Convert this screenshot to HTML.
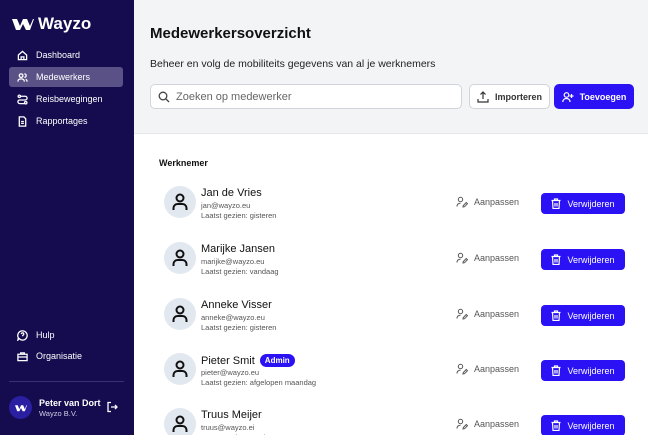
<!DOCTYPE html>
<html><head><meta charset="utf-8"><style>
*{box-sizing:border-box;margin:0;padding:0}
html,body{width:648px;height:435px;overflow:hidden}
body{font-family:"Liberation Sans",sans-serif;position:relative;background:#fff}
.sb{position:absolute;left:0;top:0;width:134px;height:435px;background:#150c4f;color:#fff}
.logo{position:absolute;left:12px;top:14px;font-size:17px;font-weight:bold;display:flex;align-items:center;gap:4px}
.nav{position:absolute;left:9px;width:114px;height:20px;border-radius:3px;font-size:9px;display:flex;align-items:center;padding-left:8px;gap:8px}
.nav svg{width:11px;height:11px;fill:none;stroke:#fff;stroke-width:1.4}
.act{background:#5a5287}
.sep{position:absolute;left:9px;right:10px;top:381px;height:1px;background:#3a3270}
.av{position:absolute;left:9px;top:396px;width:23px;height:23px;border-radius:50%;background:#2a1fa0;display:flex;align-items:center;justify-content:center;font-size:9px;font-weight:bold}
.hd{position:absolute;left:134px;top:0;right:0;height:134px;background:#f3f4f6;border-bottom:1px solid #e5e7eb}
h1{position:absolute;left:150px;top:25px;font-size:15px;font-weight:bold;color:#111}
.sub{position:absolute;left:150px;top:58px;font-size:10.5px;color:#222}
.search{position:absolute;left:150px;top:84px;width:312px;height:25px;border:1px solid #d1d5db;border-radius:5px;background:#fff;font-size:11px;color:#666;display:flex;align-items:center;padding-left:7px;gap:6px}
.btn{position:absolute;top:84px;height:25px;border-radius:5px;font-size:9px;font-weight:bold;display:flex;align-items:center;justify-content:center;gap:6px}
.imp{left:469px;width:81px;background:#fff;border:1px solid #d1d5db;color:#333}
.toe{left:554px;width:80px;background:#2a12f5;color:#fff}
.th{position:absolute;left:159px;top:158px;font-size:9px;font-weight:bold;color:#111}
.row{position:absolute;left:164px;width:470px;height:32px}
.ava{position:absolute;left:0;top:0;width:32px;height:32px;border-radius:50%;background:#e2e8f0;display:flex;align-items:center;justify-content:center}
.nm{position:absolute;left:37px;top:1px;font-size:11px;color:#111;display:flex;align-items:center;gap:5px}
.badge{background:#2a12f5;color:#fff;font-size:8px;font-weight:bold;border-radius:8px;padding:2px 5px}
.em{position:absolute;left:37px;top:15px;font-size:7.5px;color:#555}
.ls{position:absolute;left:37px;top:25px;font-size:7.5px;color:#555}
.aan{position:absolute;left:292px;top:10px;font-size:9px;color:#555;display:flex;align-items:center;gap:6px}
.ver{position:absolute;left:377px;top:7px;width:84px;height:21px;background:#2a12f5;border-radius:4px;color:#fff;font-size:9px;display:flex;align-items:center;justify-content:center;gap:6px}
</style></head><body>
<div class="sb">
 <div class="logo"><svg width="22" height="14" viewBox="0 0 22 14"><path d="M0 2h5l3 7 3-7h4l3 7 3-7h1l-4 11h-4l-3-6-3 6H4z" fill="#fff"/></svg>Wayzo</div>
 <div class="nav" style="top:45px"><svg viewBox="0 0 12 12"><path d="M1.5 5.5L6 1.5l4.5 4v5h-9z M4.5 10.5v-3h3v3"/></svg>Dashboard</div>
 <div class="nav act" style="top:67px"><svg viewBox="0 0 12 12"><circle cx="4.5" cy="4" r="2"/><path d="M1 10.5c0-2 1.5-3 3.5-3s3.5 1 3.5 3"/><path d="M8 2a2 2 0 010 4M9.5 8c1 .5 1.5 1.3 1.5 2.5"/></svg>Medewerkers</div>
 <div class="nav" style="top:89px"><svg viewBox="0 0 12 12"><circle cx="2.5" cy="2.5" r="1.3"/><circle cx="9.5" cy="9.5" r="1.3"/><path d="M4 2.5h5a2 2 0 010 4H3a2 2 0 000 4h5"/></svg>Reisbewegingen</div>
 <div class="nav" style="top:111px"><svg viewBox="0 0 12 12"><path d="M2.5 1h5l2 2v8h-7z M4.5 6h3M4.5 8h3"/></svg>Rapportages</div>
 <div class="nav" style="top:325px"><svg viewBox="0 0 12 12"><path d="M6 1a5 5 0 11-3.5 8.5L1 11l.5-2.5A5 5 0 016 1z M4.8 4.5a1.3 1.3 0 112 1c-.6.4-.8.7-.8 1.3"/></svg>Hulp</div>
 <div class="nav" style="top:346px"><svg viewBox="0 0 12 12"><path d="M1 3.5h10v7H1z M4 3.5V2h4v1.5 M1 6.5h10"/></svg>Organisatie</div>
 <div class="sep"></div>
 <div class="av"><svg width="12" height="8" viewBox="0 0 22 14"><path d="M0 2h5l3 7 3-7h4l3 7 3-7h1l-4 11h-4l-3-6-3 6H4z" fill="#fff"/></svg></div>
 <div style="position:absolute;left:39px;top:398px;font-size:9px;font-weight:bold">Peter van Dort</div>
 <div style="position:absolute;left:39px;top:409px;font-size:7.5px;color:#d0cde6">Wayzo B.V.</div>
 <svg style="position:absolute;left:106px;top:401px" width="12" height="12" viewBox="0 0 12 12" fill="none" stroke="#fff" stroke-width="1.3"><path d="M5 1.5H2v9h3 M5 6h6 M9 4l2 2-2 2"/></svg>
</div>
<div class="hd"></div>
<h1>Medewerkersoverzicht</h1>
<div class="sub">Beheer en volg de mobiliteits gegevens van al je werknemers</div>
<div class="search"><svg width="12" height="12" viewBox="0 0 12 12" fill="none" stroke="#444" stroke-width="1.3"><circle cx="5" cy="5" r="3.8"/><path d="M8 8l3 3"/></svg>Zoeken op medewerker</div>
<div class="btn imp"><svg width="12" height="12" viewBox="0 0 12 12" fill="none" stroke="#333" stroke-width="1.2"><path d="M1 8v3h10V8 M6 8V1 M3.5 3.5L6 1l2.5 2.5"/></svg>Importeren</div>
<div class="btn toe"><svg width="12" height="12" viewBox="0 0 12 12" fill="none" stroke="#fff" stroke-width="1.2"><circle cx="4.5" cy="4" r="2.3"/><path d="M.8 11c0-2.2 1.6-3.5 3.7-3.5S8 8.8 8 11 M9.5 3v4M7.5 5h4"/></svg>Toevoegen</div>
<div class="th">Werknemer</div>

<div class="row" style="top:186px"><div class="ava"><svg width="16" height="18" viewBox="0 0 16 18" fill="none" stroke="#111" stroke-width="2"><circle cx="8" cy="5" r="3.5"/><path d="M1.5 17v-2a4 4 0 014-4h5a4 4 0 014 4v2"/></svg></div><div class="nm">Jan de Vries</div><div class="em">jan@wayzo.eu</div><div class="ls">Laatst gezien: gisteren</div><div class="aan"><svg width="12" height="12" viewBox="0 0 12 12" fill="none" stroke="#555" stroke-width="1"><circle cx="4.5" cy="3.5" r="2.2"/><path d="M1 10.5c0-2 1.3-3.3 3.5-3.3 M7 11l.3-1.5 3-3 1.2 1.2-3 3z"/></svg>Aanpassen</div><div class="ver"><svg width="10" height="11" viewBox="0 0 10 11" fill="none" stroke="#fff" stroke-width="1.2"><path d="M.5 2.5h9 M3.5 2.5V1h3v1.5 M1.5 2.5l.5 8h6l.5-8 M4 5v3.5M6 5v3.5"/></svg>Verwijderen</div></div>

<div class="row" style="top:242px"><div class="ava"><svg width="16" height="18" viewBox="0 0 16 18" fill="none" stroke="#111" stroke-width="2"><circle cx="8" cy="5" r="3.5"/><path d="M1.5 17v-2a4 4 0 014-4h5a4 4 0 014 4v2"/></svg></div><div class="nm">Marijke Jansen</div><div class="em">marijke@wayzo.eu</div><div class="ls">Laatst gezien: vandaag</div><div class="aan"><svg width="12" height="12" viewBox="0 0 12 12" fill="none" stroke="#555" stroke-width="1"><circle cx="4.5" cy="3.5" r="2.2"/><path d="M1 10.5c0-2 1.3-3.3 3.5-3.3 M7 11l.3-1.5 3-3 1.2 1.2-3 3z"/></svg>Aanpassen</div><div class="ver"><svg width="10" height="11" viewBox="0 0 10 11" fill="none" stroke="#fff" stroke-width="1.2"><path d="M.5 2.5h9 M3.5 2.5V1h3v1.5 M1.5 2.5l.5 8h6l.5-8 M4 5v3.5M6 5v3.5"/></svg>Verwijderen</div></div>

<div class="row" style="top:298px"><div class="ava"><svg width="16" height="18" viewBox="0 0 16 18" fill="none" stroke="#111" stroke-width="2"><circle cx="8" cy="5" r="3.5"/><path d="M1.5 17v-2a4 4 0 014-4h5a4 4 0 014 4v2"/></svg></div><div class="nm">Anneke Visser</div><div class="em">anneke@wayzo.eu</div><div class="ls">Laatst gezien: gisteren</div><div class="aan"><svg width="12" height="12" viewBox="0 0 12 12" fill="none" stroke="#555" stroke-width="1"><circle cx="4.5" cy="3.5" r="2.2"/><path d="M1 10.5c0-2 1.3-3.3 3.5-3.3 M7 11l.3-1.5 3-3 1.2 1.2-3 3z"/></svg>Aanpassen</div><div class="ver"><svg width="10" height="11" viewBox="0 0 10 11" fill="none" stroke="#fff" stroke-width="1.2"><path d="M.5 2.5h9 M3.5 2.5V1h3v1.5 M1.5 2.5l.5 8h6l.5-8 M4 5v3.5M6 5v3.5"/></svg>Verwijderen</div></div>

<div class="row" style="top:353px"><div class="ava"><svg width="16" height="18" viewBox="0 0 16 18" fill="none" stroke="#111" stroke-width="2"><circle cx="8" cy="5" r="3.5"/><path d="M1.5 17v-2a4 4 0 014-4h5a4 4 0 014 4v2"/></svg></div><div class="nm">Pieter Smit <span class="badge">Admin</span></div><div class="em">pieter@wayzo.eu</div><div class="ls">Laatst gezien: afgelopen maandag</div><div class="aan"><svg width="12" height="12" viewBox="0 0 12 12" fill="none" stroke="#555" stroke-width="1"><circle cx="4.5" cy="3.5" r="2.2"/><path d="M1 10.5c0-2 1.3-3.3 3.5-3.3 M7 11l.3-1.5 3-3 1.2 1.2-3 3z"/></svg>Aanpassen</div><div class="ver"><svg width="10" height="11" viewBox="0 0 10 11" fill="none" stroke="#fff" stroke-width="1.2"><path d="M.5 2.5h9 M3.5 2.5V1h3v1.5 M1.5 2.5l.5 8h6l.5-8 M4 5v3.5M6 5v3.5"/></svg>Verwijderen</div></div>

<div class="row" style="top:408px"><div class="ava"><svg width="16" height="18" viewBox="0 0 16 18" fill="none" stroke="#111" stroke-width="2"><circle cx="8" cy="5" r="3.5"/><path d="M1.5 17v-2a4 4 0 014-4h5a4 4 0 014 4v2"/></svg></div><div class="nm">Truus Meijer</div><div class="em">truus@wayzo.ei</div><div class="ls">Laatst gezien: Nooit</div><div class="aan"><svg width="12" height="12" viewBox="0 0 12 12" fill="none" stroke="#555" stroke-width="1"><circle cx="4.5" cy="3.5" r="2.2"/><path d="M1 10.5c0-2 1.3-3.3 3.5-3.3 M7 11l.3-1.5 3-3 1.2 1.2-3 3z"/></svg>Aanpassen</div><div class="ver"><svg width="10" height="11" viewBox="0 0 10 11" fill="none" stroke="#fff" stroke-width="1.2"><path d="M.5 2.5h9 M3.5 2.5V1h3v1.5 M1.5 2.5l.5 8h6l.5-8 M4 5v3.5M6 5v3.5"/></svg>Verwijderen</div></div>
</body></html>
